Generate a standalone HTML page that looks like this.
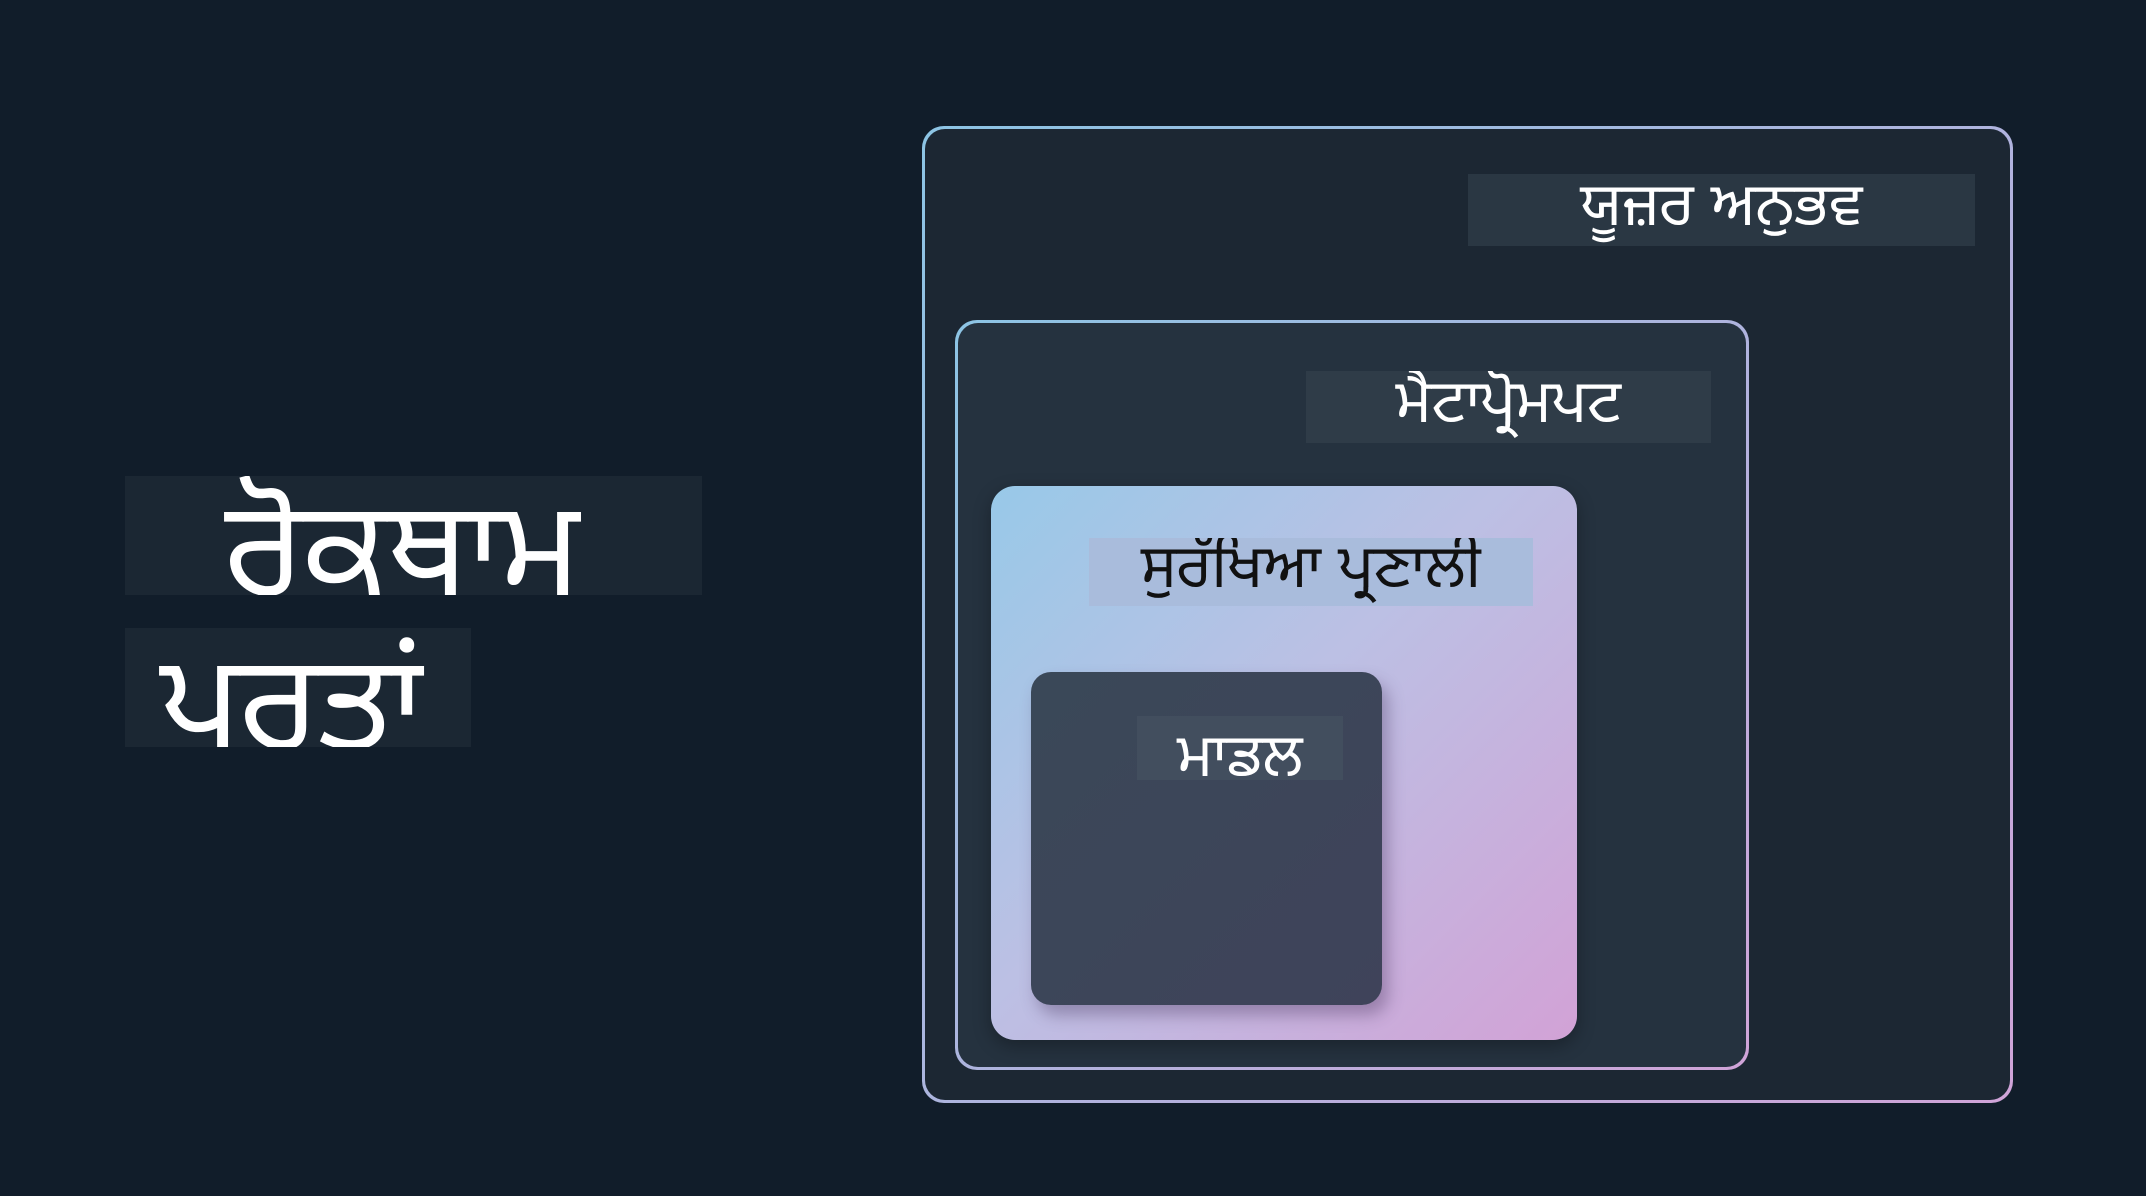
<!DOCTYPE html>
<html><head><meta charset="utf-8"><style>
html,body{margin:0;padding:0}
body{width:2146px;height:1196px;background:#111d2a;position:relative;overflow:hidden;font-family:"Liberation Sans","Noto Sans Gurmukhi","Lohit Gurmukhi",sans-serif}
.abs{position:absolute;box-sizing:border-box}
.gb{background:linear-gradient(135deg,#8cc4e4,#d0a4d8);border-radius:22px}
.lbl{position:absolute;box-sizing:border-box;display:flex;align-items:center;justify-content:center;color:#fff;font-weight:normal;white-space:nowrap;overflow:hidden}
.lbl span{position:relative}
</style></head><body>
<div class="lbl" style="left:125px;top:476px;width:577px;height:119px;background:#1b2733;font-size:135px;justify-content:flex-start;padding-left:100px;align-items:flex-end;line-height:1"><span style="top:22px">ਰੋਕਥਾਮ</span></div>
<div class="lbl" style="left:125px;top:628px;width:346px;height:119px;background:#1b2733;font-size:135px;justify-content:flex-start;padding-left:35px;align-items:flex-end;line-height:1"><span style="top:24px">ਪਰਤਾਂ</span></div>

<div class="abs gb" style="left:922px;top:126px;width:1091px;height:977px"></div>
<div class="abs" style="left:925px;top:129px;width:1085px;height:971px;background:#1c2733;border-radius:20px"></div>
<div class="lbl" style="left:1468px;top:174px;width:507px;height:72px;background:#2a3743;font-size:60px">ਯੂਜ਼ਰ ਅਨੁਭਵ</div>

<div class="abs gb" style="left:955px;top:320px;width:794px;height:750px"></div>
<div class="abs" style="left:958px;top:323px;width:788px;height:744px;background:#25323f;border-radius:20px"></div>
<div class="lbl" style="left:1306px;top:371px;width:405px;height:72px;background:#2f3c48;font-size:60px">ਮੈਟਾਪ੍ਰੋਮਪਟ</div>

<div class="abs" style="left:991px;top:486px;width:586px;height:554px;border-radius:24px;background:linear-gradient(135deg,#98c9e8,#bcc0e4 45%,#d2a2d6);box-shadow:0 6px 18px rgba(0,0,0,.3)"></div>
<div class="lbl" style="left:1089px;top:538px;width:444px;height:68px;background:#a9bcdc;color:#111;font-size:60px">ਸੁਰੱਖਿਆ ਪ੍ਰਣਾਲੀ</div>

<div class="abs" style="left:1031px;top:672px;width:351px;height:333px;border-radius:20px;background:linear-gradient(135deg,#3a4858,#3f435a);box-shadow:6px 10px 16px rgba(60,40,80,.35)"></div>
<div class="lbl" style="left:1137px;top:716px;width:206px;height:64px;background:#424e5e;font-size:60px;align-items:flex-end;line-height:1"><span style="top:6px">ਮਾਡਲ</span></div>
</body></html>
